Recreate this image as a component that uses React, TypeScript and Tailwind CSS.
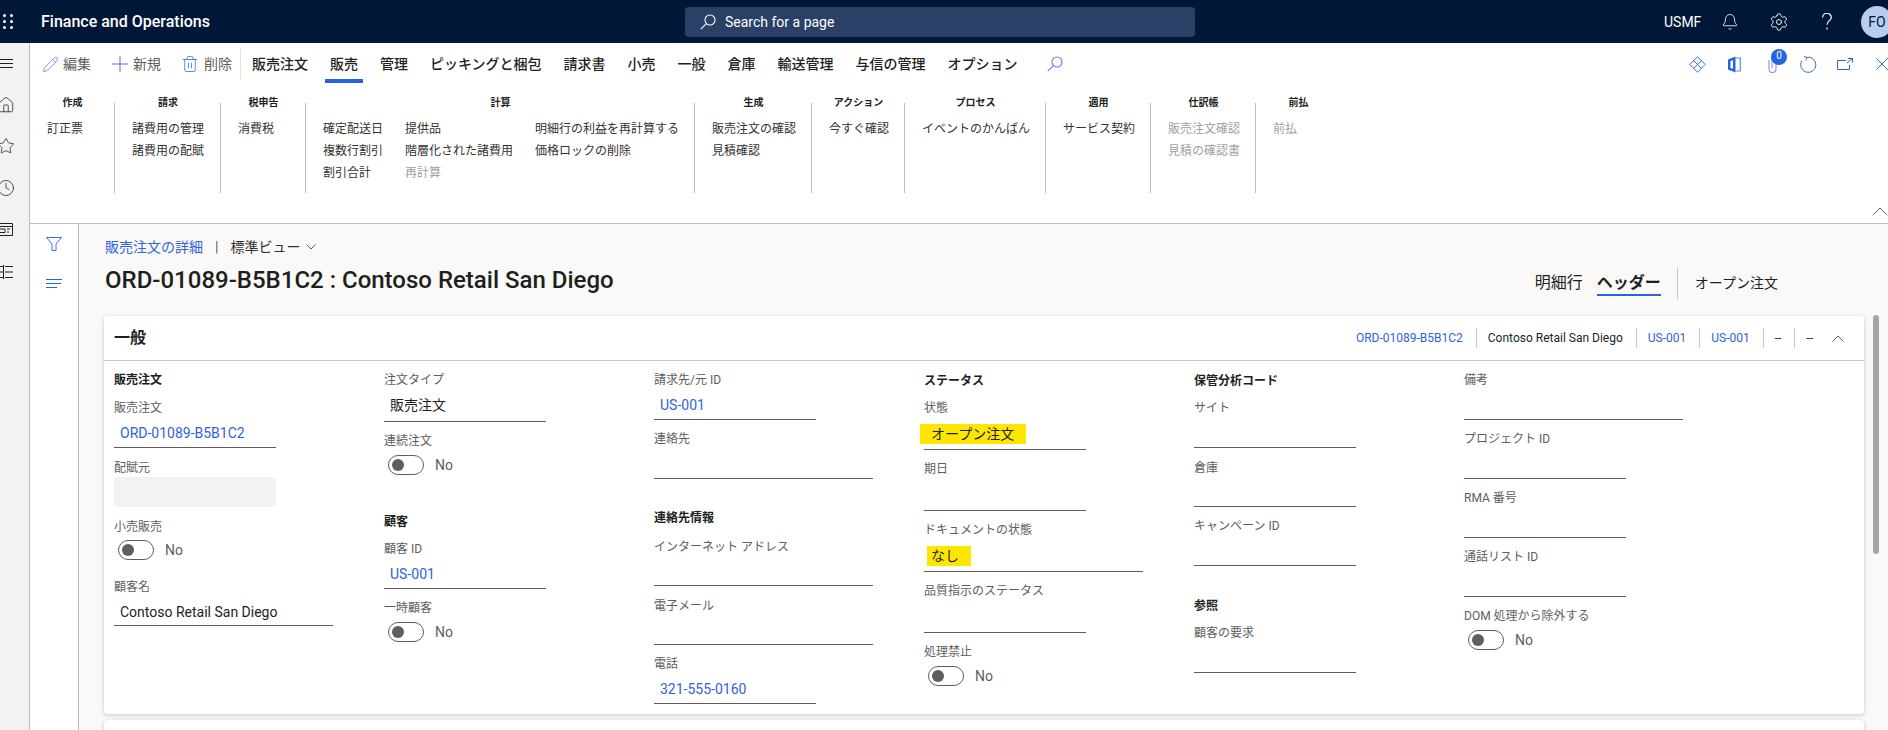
import { ReactNode } from "react";
import { Bell, Clock, Home, Pencil, Settings, Star, Trash2 } from "lucide-react";

const ribbonGroups = [
  { title: "作成", width: "w-[85px]", columns: [["訂正票"]] },
  { title: "請求", width: "w-[106px]", columns: [["諸費用の管理", "諸費用の配賦"]] },
  { title: "税申告", width: "w-[85px]", columns: [["消費税"]] },
  {
    title: "計算",
    width: "w-[389px]",
    columns: [
      ["確定配送日", "複数行割引", "割引合計"],
      ["提供品", "階層化された諸費用", "*再計算"],
      ["明細行の利益を再計算する", "価格ロックの削除"],
    ],
  },
  { title: "生成", width: "w-[117px]", columns: [["販売注文の確認", "見積確認"]] },
  { title: "アクション", width: "w-[93px]", columns: [["今すぐ確認"]] },
  { title: "プロセス", width: "w-[141px]", columns: [["イベントのかんばん"]] },
  { title: "適用", width: "w-[105px]", columns: [["サービス契約"]] },
  { title: "仕訳帳", width: "w-[105px]", columns: [["*販売注文確認", "*見積の確認書"]] },
  { title: "前払", width: "w-[85px]", columns: [["*前払"]] },
];

function Label({ children }: { children: ReactNode }) {
  return <div className="h-[18px] text-xs leading-[18px] text-[#605e5c]">{children}</div>;
}

function Heading({ children, className = "" }: { children: ReactNode; className?: string }) {
  return (
    <div className={`h-[18px] text-xs leading-[18px] font-semibold text-[#201f1e] ${className}`}>
      {children}
    </div>
  );
}

function Field({
  label,
  value,
  link,
  wide,
  height = "h-[31px]",
  className = "",
}: {
  label: string;
  value?: string;
  link?: boolean;
  wide?: boolean;
  height?: string;
  className?: string;
}) {
  return (
    <div className={className}>
      <Label>{label}</Label>
      <div
        className={`${height} ${wide ? "w-[219px]" : "w-[162px]"} border-b border-[#605e5c] pl-[6px] pt-[6px] text-sm leading-5 ${
          link ? "text-[#2f62e0]" : "text-[#201f1e]"
        }`}
      >
        {value}
      </div>
    </div>
  );
}

function Toggle({ label, className = "", pad = "pt-[5px]" }: { label: string; className?: string; pad?: string }) {
  return (
    <div className={className}>
      <Label>{label}</Label>
      <div className={`flex items-center gap-[11px] pl-[4px] ${pad}`}>
        <div className="flex h-5 w-9 items-center rounded-full border border-[#605e5c] pl-[3px]">
          <div className="h-3 w-3 rounded-full bg-[#605e5c]" />
        </div>
        <span className="text-sm leading-5 text-[#605e5c]">No</span>
      </div>
    </div>
  );
}

function Highlighted({
  label,
  value,
  wide,
  box,
  className = "",
}: {
  label: string;
  value: string;
  wide?: boolean;
  box: string;
  className?: string;
}) {
  return (
    <div className={className}>
      <Label>{label}</Label>
      <div className={`h-[33px] ${wide ? "w-[219px]" : "w-[162px]"} border-b border-[#605e5c] pt-[7px]`}>
        <div className={`h-5 bg-[#ffe600] text-sm leading-5 text-[#201f1e] ${box}`}>{value}</div>
      </div>
    </div>
  );
}

function Sep() {
  return <div className="ml-[13px] mr-[11px] h-5 w-px bg-[#c8c6c4]" />;
}

function Chevron({ width, down, className = "" }: { width: number; down?: boolean; className?: string }) {
  const h = width / 2 + 1;
  return (
    <svg width={width} height={h} viewBox={`0 0 ${width} ${h}`} fill="none" stroke="#605e5c" strokeWidth="1" className={className}>
      <path d={down ? `M.5 .5L${width / 2} ${h - 1}L${width - 0.5} .5` : `M.5 ${h - 0.5}L${width / 2} 1L${width - 0.5} ${h - 0.5}`} />
    </svg>
  );
}

function SearchIcon({ color }: { color: string }) {
  return (
    <svg width="16" height="16" viewBox="0 0 16 16" fill="none" stroke={color} strokeWidth="1.1">
      <circle cx="10" cy="6" r="5" />
      <path d="M6.4 9.6L.8 15.2" />
    </svg>
  );
}

function DiamondIcon() {
  return (
    <svg width="17" height="17" viewBox="0 0 17 17" fill="none" stroke="#3b6fe6" strokeWidth="1">
      <path d="M8.5 .8l3.8 3.8-3.8 3.9-3.8-3.9zM8.5 8.5l3.8 3.9-3.8 3.8-3.8-3.8zM4.7 4.6l3.8 3.9-3.8 3.9L.8 8.5zM12.3 4.6l3.9 3.9-3.9 3.9-3.8-3.9z" />
    </svg>
  );
}

function OfficeIcon() {
  return (
    <svg width="13" height="17" viewBox="0 0 13 17">
      <path d="M0 3.5L7.5 .5v16L0 13.5z" fill="#2266e3" />
      <path d="M2.5 5l2.5-.8v8.6l-2.5-.8z" fill="#fff" />
      <path d="M7.5 2h4.8v13H7.5" fill="none" stroke="#5b8af0" strokeWidth="1.2" />
    </svg>
  );
}

function ClipIcon() {
  return (
    <svg width="9" height="17" viewBox="0 0 9 17" fill="none" stroke="#a98fe0" strokeWidth="1.2">
      <path d="M1 4v9a3.5 3.5 0 007 0V3a2 2 0 00-4 0v9" />
    </svg>
  );
}

function RefreshIcon() {
  return (
    <svg width="17" height="17" viewBox="0 0 17 17" fill="none" stroke="#3b6fe6" strokeWidth="1">
      <path d="M6.5 1.4a7.6 7.6 0 11-4.7 3.4" />
      <path d="M4 .4l3 1.1-1.4 3" />
    </svg>
  );
}

function OpenIcon() {
  return (
    <svg width="16" height="12" viewBox="0 0 16 12" fill="none" stroke="#2266e3" strokeWidth="1">
      <path d="M9 2.5H.5v9h12V7" />
      <path d="M11 .5h4.5V4.5M15.5 .5L10 5" />
    </svg>
  );
}

function CloseIcon() {
  return (
    <svg width="12" height="12" viewBox="0 0 12 12" fill="none" stroke="#3b6fe6" strokeWidth="1">
      <path d="M.5 .5l13 13M.5 11.5l13-13" />
    </svg>
  );
}

function PlusIcon() {
  return (
    <svg width="16" height="16" viewBox="0 0 16 16" fill="none" stroke="#5b6fe6" strokeWidth="1">
      <path d="M8 0v16M0 8h16" />
    </svg>
  );
}

function FormIcon() {
  return (
    <svg width="13" height="13" viewBox="0 0 13 13" fill="none" stroke="#201f1e" strokeWidth="1">
      <path d="M-1 .5h13.5v12H-1M-1 3.5h13.5M0 6h5v3.5H0M7 6h3M7 9h2" />
    </svg>
  );
}

function ListIcon() {
  return (
    <svg width="13" height="14" viewBox="0 0 13 14" fill="none" stroke="#201f1e" strokeWidth="1">
      <path d="M0 1.5h3M0 7h3M0 12.5h3M3.5 0v14M5 1.5h8M5 7h8M5 12.5h8" />
    </svg>
  );
}

function HamburgerIcon() {
  return (
    <svg width="13" height="9" viewBox="0 0 13 9" fill="none" stroke="#201f1e" strokeWidth="1">
      <path d="M0 .5h13M0 4.5h13M0 8.5h13" />
    </svg>
  );
}

function FilterIcon() {
  return (
    <svg width="16" height="14" viewBox="0 0 16 14" fill="none" stroke="#3b6fe6" strokeWidth="1">
      <path d="M.5 .5h15L10 7v6.5H6V7z" />
    </svg>
  );
}

function LinesIcon() {
  return (
    <svg width="16" height="9" viewBox="0 0 16 9" fill="none" stroke="#2266e3" strokeWidth="1">
      <path d="M0 .5h16M0 4.5h15M0 8.5h11" />
    </svg>
  );
}

function HelpIcon() {
  return (
    <svg width="10" height="17" viewBox="0 0 10 17" fill="none" stroke="#fff" strokeWidth="1.2">
      <path d="M.7 4.5a4.3 4.3 0 118.6 0c0 3.2-4.3 3.2-4.3 7.2M5 14.5v2" />
    </svg>
  );
}

function Waffle() {
  return (
    <div className="-ml-[4px] grid w-[17px] grid-cols-3 gap-x-[4px] gap-y-[3px]">
      {Array.from({ length: 9 }).map((_, i) => (
        <div key={i} className="h-[3px] w-[3px] rounded-full bg-white" />
      ))}
    </div>
  );
}

export default function App() {
  return (
    <div
      className="flex h-[730px] w-[1888px] flex-col overflow-hidden bg-white text-[#201f1e]"
      style={{ fontFamily: 'Roboto, "Noto Sans CJK JP", sans-serif' }}
    >
      <header className="flex h-[43px] shrink-0 items-center whitespace-nowrap bg-[#001738] text-white">
        <div className="w-[41px] shrink-0">
          <Waffle />
        </div>
        <div className="w-[644px] shrink-0 text-base leading-5 font-medium">Finance and Operations</div>
        <div className="flex h-[30px] w-[510px] shrink-0 items-center gap-[9px] rounded-sm bg-[#2a4066] pl-[15px] text-sm">
          <SearchIcon color="#ffffff" />
          <span>Search for a page</span>
        </div>
        <div className="ml-[469px] w-[57px] shrink-0 text-sm">USMF</div>
        <Bell size={18} strokeWidth={1.1} className="shrink-0" />
        <Settings size={20} strokeWidth={1.1} className="ml-[30px] shrink-0" />
        <div className="ml-[33px] shrink-0">
          <HelpIcon />
        </div>
        <div className="ml-[29px] flex h-8 w-8 shrink-0 items-center justify-center rounded-full bg-[#b8cdf0] text-sm text-[#001738]">
          FO
        </div>
      </header>

      <div className="flex min-h-0 flex-1">
        <nav className="flex w-[30px] shrink-0 flex-col border-r border-[#bdbdbd] bg-[#f3f2f1] pt-[16px] text-[#201f1e]">
          <HamburgerIcon />
          <Home size={18} strokeWidth={1} className="-ml-[3px] mt-[28px]" />
          <Star size={18} strokeWidth={1} className="-ml-[3px] mt-[23px]" />
          <Clock size={18} strokeWidth={1} className="-ml-[3px] mt-[24px]" />
          <div className="mt-[26px]">
            <FormIcon />
          </div>
          <div className="mt-[29px]">
            <ListIcon />
          </div>
        </nav>

        <div className="flex min-w-0 flex-1 flex-col">
          <section className="h-[181px] shrink-0 border-b border-[#bdbdbd] bg-white">
            <div className="flex h-[42px] items-center whitespace-nowrap pl-[12px] text-sm">
              <Pencil size={17} strokeWidth={1} className="shrink-0 text-[#4a6fe0]" />
              <span className="ml-[4px] text-[#605e5c]">編集</span>
              <div className="ml-[21px] shrink-0">
                <PlusIcon />
              </div>
              <span className="ml-[5px] text-[#605e5c]">新規</span>
              <Trash2 size={18} strokeWidth={1} className="ml-[20px] shrink-0 text-[#2266e3]" />
              <span className="ml-[5px] text-[#605e5c]">削除</span>
              <div className="ml-[8px] h-[30px] w-px shrink-0 bg-[#e1dfdd]" />
              <div className="ml-[11px] flex gap-[22px] font-medium text-[#201f1e]">
                {["販売注文", "販売", "管理", "ピッキングと梱包", "請求書", "小売", "一般", "倉庫", "輸送管理", "与信の管理", "オプション"].map((tab) => (
                  <span key={tab} className="relative">
                    {tab}
                    {tab === "販売" && (
                      <span className="absolute -left-[5px] -right-[5px] top-[25px] h-[4px] bg-[#2266e3]" />
                    )}
                  </span>
                ))}
              </div>
              <div className="ml-[29px] shrink-0">
                <SearchIcon color="#5f7fe8" />
              </div>
              <div className="ml-auto flex shrink-0 items-center">
                <DiamondIcon />
                <div className="ml-[22px]">
                  <OfficeIcon />
                </div>
                <div className="relative ml-[27px]">
                  <ClipIcon />
                  <span className="absolute -top-[7px] left-[3px] flex h-4 w-4 items-center justify-center rounded-full bg-[#2266e3] text-[10px] text-white">
                    0
                  </span>
                </div>
                <div className="ml-[23px]">
                  <RefreshIcon />
                </div>
                <div className="ml-[20px]">
                  <OpenIcon />
                </div>
                <div className="ml-[23px]">
                  <CloseIcon />
                </div>
              </div>
            </div>

            <div className="mt-[11px] flex">
              {ribbonGroups.map((group) => (
                <div key={group.title} className={`${group.width} shrink-0`}>
                  <div className="h-[7px] text-center text-[10px] leading-[14px] font-semibold">{group.title}</div>
                  <div className={`h-[90px] pl-[17px] pt-[17px] text-xs ${group.title === "前払" ? "" : "border-r border-[#bdbdbd]"}`}>
                    <div className="flex gap-[22px]">
                      {group.columns.map((col, i) => (
                        <div key={i} className="flex flex-col gap-[4px]">
                          {col.map((item) => (
                            <span
                              key={item}
                              className={`leading-[18px] ${item.startsWith("*") ? "text-[#a19f9d]" : "text-[#323130]"}`}
                            >
                              {item.replace("*", "")}
                            </span>
                          ))}
                        </div>
                      ))}
                    </div>
                  </div>
                </div>
              ))}
            </div>
            <div className="mt-[14px] flex justify-end pr-[1px]">
              <Chevron width={14} />
            </div>
          </section>

          <div className="flex min-h-0 flex-1">
            <aside className="flex w-[49px] shrink-0 flex-col items-center gap-[28px] border-r border-[#bdbdbd] bg-white pt-[13px]">
              <FilterIcon />
              <LinesIcon />
            </aside>

            <main className="relative min-w-0 flex-1 bg-[#faf9f8] pl-[25px]">
              <div className="flex h-[40px] items-center pl-px pt-[6px] text-sm">
                <span className="text-[#2f62e0]">販売注文の詳細</span>
                <span className="ml-[12px] text-[#605e5c]">|</span>
                <span className="ml-[12px] text-[#323130]">標準ビュー</span>
                <Chevron width={10} down className="ml-[6px]" />
              </div>
              <div className="flex h-[52px] items-start justify-between pl-px pr-[110px]">
                <h1 className="text-2xl leading-8 font-medium text-[#201f1e]">
                  ORD-01089-B5B1C2 : Contoso Retail San Diego
                </h1>
                <div className="flex h-[38px] items-center text-base">
                  <span>明細行</span>
                  <span className="ml-[14px] mt-[1px] border-b-2 border-[#2266e3] leading-[22px] font-semibold">ヘッダー</span>
                  <div className="ml-[16px] h-8 w-px bg-[#c8c6c4]" />
                  <span className="ml-[17px] text-sm">オープン注文</span>
                </div>
              </div>

              <div className="absolute top-[91px] right-[9px] h-[239px] w-[6px] rounded-full bg-[#a6a6a6]" />

              <div className="mr-[24px] h-[398px] rounded-sm bg-white shadow-[0_1px_4px_rgba(0,0,0,0.2)]">
                <div className="flex h-[45px] items-center justify-between border-b border-[#c8c6c4] pl-[10px] pr-[20px]">
                  <span className="text-base font-semibold">一般</span>
                  <div className="flex items-center text-xs">
                    <span className="text-[#2f62e0]">ORD-01089-B5B1C2</span>
                    <Sep />
                    <span>Contoso Retail San Diego</span>
                    <Sep />
                    <span className="text-[#2f62e0]">US-001</span>
                    <Sep />
                    <span className="text-[#2f62e0]">US-001</span>
                    <Sep />
                    <span>--</span>
                    <Sep />
                    <span>--</span>
                    <Chevron width={12} className="ml-[19px]" />
                  </div>
                </div>

                <div className="grid grid-cols-[270px_270px_270px_270px_270px_270px] pl-[10px] pt-[10px]">
                  <div>
                    <Heading className="mb-[10px]">販売注文</Heading>
                    <Field label="販売注文" value="ORD-01089-B5B1C2" link className="mb-[11px]" />
                    <div className="mb-[11px]">
                      <Label>配賦元</Label>
                      <div className="h-[30px] w-[162px] rounded-sm bg-[#f3f2f1]" />
                    </div>
                    <Toggle label="小売販売" pad="pt-[4px]" className="mb-[18px]" />
                    <Field label="顧客名" value="Contoso Retail San Diego" wide height="h-[30px]" />
                  </div>

                  <div>
                    <Field label="注文タイプ" value="販売注文" height="h-[33px]" className="mb-[10px]" />
                    <Toggle label="連続注文" className="mb-[38px]" />
                    <Heading className="mb-[9px]">顧客</Heading>
                    <Field label="顧客 ID" value="US-001" link className="mb-[10px]" />
                    <Toggle label="一時顧客" />
                  </div>

                  <div>
                    <Field label="請求先/元 ID" value="US-001" link className="mb-[10px]" />
                    <Field label="連絡先" wide className="mb-[30px]" />
                    <Heading className="mb-[11px]">連絡先情報</Heading>
                    <Field label="インターネット アドレス" wide height="h-[30px]" className="mb-[11px]" />
                    <Field label="電子メール" wide height="h-[30px]" className="mb-[10px]" />
                    <Field label="電話" value="321-555-0160" link />
                  </div>

                  <div className="pt-px">
                    <Heading className="mb-[9px]">ステータス</Heading>
                    <Highlighted label="状態" value="オープン注文" box="-ml-[4px] w-[106px] pl-[11px]" className="mb-[10px]" />
                    <Field label="期日" height="h-[33px]" className="mb-[10px]" />
                    <Highlighted label="ドキュメントの状態" value="なし" wide box="ml-[3px] w-[44px] pl-[4px]" className="mb-[10px]" />
                    <Field label="品質指示のステータス" height="h-[33px]" className="mb-[10px]" />
                    <Toggle label="処理禁止" />
                  </div>

                  <div className="pt-px">
                    <Heading className="mb-[9px]">保管分析コード</Heading>
                    <Field label="サイト" className="mb-[11px]" />
                    <Field label="倉庫" height="h-[30px]" className="mb-[10px]" />
                    <Field label="キャンペーン ID" className="mb-[31px]" />
                    <Heading className="mb-[9px]">参照</Heading>
                    <Field label="顧客の要求" />
                  </div>

                  <div>
                    <Field label="備考" wide className="mb-[10px]" />
                    <Field label="プロジェクト ID" className="mb-[10px]" />
                    <Field label="RMA 番号" className="mb-[10px]" />
                    <Field label="通話リスト ID" className="mb-[10px]" />
                    <Toggle label="DOM 処理から除外する" />
                  </div>
                </div>
              </div>

              <div className="mr-[24px] mt-[6px] h-[40px] rounded-sm bg-white shadow-[0_1px_4px_rgba(0,0,0,0.2)]" />
            </main>
          </div>
        </div>
      </div>
    </div>
  );
}
